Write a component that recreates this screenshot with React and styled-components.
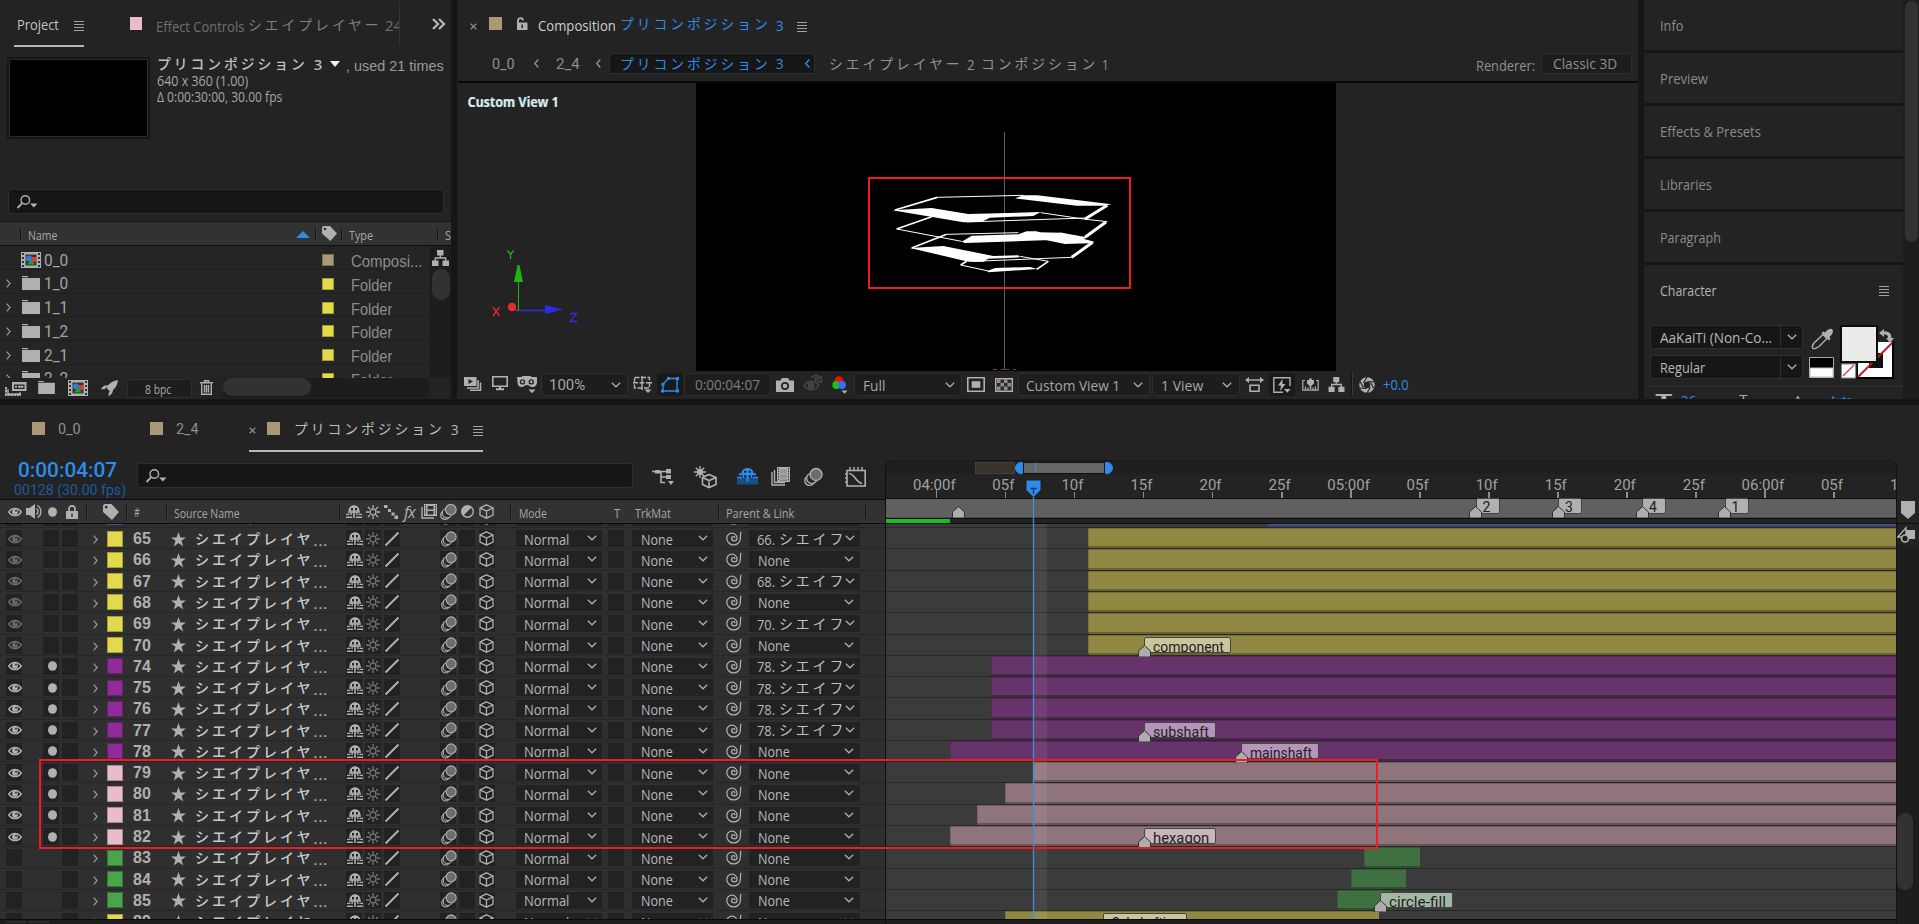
import React, { useLayoutEffect, useRef, useState } from "react";
import styled, { createGlobalStyle, css } from "styled-components";

const Global = createGlobalStyle`
  * { box-sizing: border-box; }
  html, body { margin: 0; padding: 0; background: #161616; overflow: hidden; }
  body { font-family: "Open Sans", "Noto Sans", "Noto Sans CJK JP", sans-serif; color: #a6a6a6; }
  svg { display: block; flex: none; }
`;

const C = {
  panel: "#232323", dark: "#161616", field: "#1d1d1d", edge: "#2e2e2e",
  icon: "#b0b0b0", text: "#a6a6a6", dim: "#7d7d7d", blue: "#2d8ceb", tan: "#ac9878",
  yellow: "#e4d84c", purple: "#902c98", pink: "#e8bcca", green: "#4aa44c",
};

/* ---------- text ---------- */
const FitBox = styled.span`
  display: block; flex: none; overflow: visible; white-space: pre;
  width: ${p => p.$w}px; margin-left: ${p => p.$ml || 0}px; margin-top: ${p => p.$dy || 0}px;
  font-size: ${p => p.$size || 15}px; line-height: 20px; height: 20px;
  color: ${p => p.$c || C.text}; font-weight: ${p => p.$b || 400};
  ${p => p.$roboto && css`font-family: Roboto, "Liberation Sans", sans-serif;`}
  ${p => p.$arial && css`font-family: "Liberation Sans", sans-serif;`}
  ${p => p.$jp && css`font-family: "Noto Sans CJK JP", sans-serif; letter-spacing: 3px;`}
`;
const FitText = styled.span`display: inline-block; transform-origin: 0 50%;`;

function T({ w, ml, dy, size, c, b, roboto, arial, jp, children }) {
  const ref = useRef(null);
  const [s, setS] = useState(1);
  useLayoutEffect(() => { setS(w / ref.current.offsetWidth); }, [w, children]);
  return (
    <FitBox $w={w} $ml={ml} $dy={dy} $size={size} $c={c} $b={b} $roboto={roboto} $arial={arial} $jp={jp}>
      <FitText ref={ref} style={{ transform: `scaleX(${s})` }}>{children}</FitText>
    </FitBox>
  );
}
function J({ children, ml, c, b, dy, pitch = 16.75, size = 14 }) {
  return <T jp w={pitch * children.length} ml={ml} c={c} b={b} dy={dy} size={size}>{children}</T>;
}

/* ---------- icons ---------- */
const Svg = styled.svg`margin-left: ${p => p.$ml || 0}px; margin-top: ${p => p.$dy || 0}px; overflow: visible;`;
const K = C.icon;
const S = { fill: "none", stroke: K, strokeWidth: 1.4 };
const ICONS = {
  burger: [10, 10, <path d="M0 .5h10M0 3.5h10M0 6.5h10M0 9.5h10" stroke="#a2a2a2" strokeWidth="1" />],
  close: [7, 7, <path d="M.7.7l5.6 5.6M6.3.7L.7 6.3" stroke="#8a8a8a" strokeWidth="1.3" />],
  dbl: [14, 12, <path d="M1 1l5 5-5 5M7 1l5 5-5 5" fill="none" stroke={K} strokeWidth="2.4" />],
  search: [20, 14, <g><circle cx="8.3" cy="5" r="4.3" {...S} /><path d="M5.2 8.2L.5 13" {...S} strokeWidth="1.8" /><path d="M13 8.5h7.5l-3.700 4z" fill={K} /></g>],
  chev: [10, 6, <path d="M.8.8L5 4.800 9.200.8" fill="none" stroke={K} strokeWidth="1.2" />],
  right: [5, 9, <path d="M.7.7l3.400 3.800L.7 8.300" fill="none" stroke="#9a9a9a" strokeWidth="1.2" />],
  left: [5, 9, <path d="M4.300.5L.8 4.500l3.500 4" fill="none" stroke="currentColor" strokeWidth="1.4" />],
  tag: [16, 16, <path fillRule="evenodd" d="M0 1.500L1.500 0h7L16 8l-7 8L0 8zM3.200 1.800a1.400 1.400 0 100 2.800 1.400 1.400 0 000-2.800z" fill={K} />],
  sort: [14, 7, <path d="M0 7l7-7 7 7z" fill={C.blue} />],
  down: [10, 6, <path d="M0 0h10L5 6z" fill="#f2f2f2" />],
  folder: [18, 14, <path d="M0 0h6v1.200H0zM0 2h18v12H0z" fill={K} />],
  comp: [20, 16, <g><path d="M0 0h20v16H0z" fill={K} /><path d="M2 1v14M18 1v14" stroke="#333" strokeWidth="2" strokeDasharray="2 2" /><path d="M4.500 2.500h11v11h-11z" fill="#333" /><circle cx="8" cy="6.500" r="3" fill="#2d7de0" /><path d="M10.500 5H15v5h-4.500z" fill="#e23434" /><path d="M6 12.500l4-5 4 5z" fill="#1ba31b" /></g>],
  org: [17, 16, <g><path d="M5 0h6.500v5.500H5zM0 10.500h6.500V16H0zM10.500 10.500H17V16h-6.500z" fill={K} /><path d="M8.300 5v3M3.300 11V8h10.400v3" {...S} /></g>],
  interp: [22, 15, <g><path d="M7 1h14.500v9H7z" fill={K} /><path d="M9 3.500h10.500v4.500H9z" fill="#232323" /><path d="M10 5.700h8.500" stroke={K} strokeWidth="2" strokeDasharray="2 1 6" /><path d="M1 6v8h14v-3" fill="none" stroke={K} strokeWidth="2" strokeDasharray="2.500 .6" /><path d="M3 8v5h11" {...S} /></g>],
  rocket: [17, 16, <g><path d="M17 0C11 1 7 4 5.500 8l3.500 3.500C14 9.500 16 6 17 0z" fill={K} /><path d="M0 9.500C1.500 6 4 5 7 5L4 9zM7.500 16c3.500-1.500 4.500-4 4.500-7L8 12z" fill={K} /></g>],
  trash: [13, 15, <g><path d="M4.500 2V.7h4V2M0 2.700h13" {...S} /><path d="M1.700 3.500V14.300h9.600V3.500M4.500 5v7.500M6.500 5v7.500M8.500 5v7.500" {...S} /></g>],
  unlock: [12, 13, <g><path d="M2 6V3.500C2 .2 7 .2 7 3.500" {...S} strokeWidth="1.800" /><path fillRule="evenodd" d="M1 5.500h10.500V13H1zM5.500 7.500v3.500h1.500V7.500z" fill={K} /></g>],
  lock: [12, 14, <g><path d="M3 6.500V4c0-4.300 6-4.300 6 0v2.500" {...S} strokeWidth="1.700" /><path fillRule="evenodd" d="M0 6h12v8H0zM5.300 8.500V12h1.400V8.500z" fill={K} /></g>],
  stack: [17, 14, <g><path d="M0 0h12.500v9H0z" fill={K} /><path d="M4.500 2l4.500 2.500L4.500 7z" fill="#232323" /><path d="M14 3v8H3M16.500 5.500V13.300H6" {...S} strokeWidth="1.600" /></g>],
  monitor: [16, 14, <g><path d="M.8.8h14.400v9.400H.8z" {...S} strokeWidth="1.600" /><path d="M4 13.300h8M8 10v3" {...S} strokeWidth="2" /></g>],
  goggles: [20, 17, <g><path fillRule="evenodd" d="M0 1h4l2-1h7l2 1h5v5c0 3-2 5-4.500 5-2.500 0-3.500-2-5.500-2S7 11 4.500 11C2 11 .5 9 .5 6zM5.500 3.200a2.700 2.700 0 100 5.400 2.700 2.700 0 000-5.400zM14.300 3.200a2.700 2.700 0 100 5.400 2.700 2.700 0 000-5.400z" fill={K} /><circle cx="5.500" cy="5.900" r="1.300" fill={K} /><circle cx="14.300" cy="5.900" r="1.300" fill={K} /><path d="M11.500 13.500h7l-3.500 3.800z" fill={K} /></g>],
  grid: [19, 17, <g><path d="M1.500 1.500h15v10.500h-15z" {...S} strokeDasharray="5 1.500" /><path d="M9 0v14M0 6.700h5M13 6.700h6M6.500 6.700h5" {...S} /><path d="M11.500 13.500h7l-3.500 3.500z" fill={K} /></g>],
  mask: [18, 16, <g><path d="M2 14V7l5.500-5.500H16V14z" fill="none" stroke={C.blue} strokeWidth="1.400" /><path d="M0 12.500h3v3H0zM15 12.500h3v3h-3zM15 0h3v3h-3zM6 0h3v3H6zM.5 6h3v3h-3z" fill={C.blue} /></g>],
  camera: [18, 14, <g><path fillRule="evenodd" d="M0 2.500h4.500L6 0h6l1.500 2.500H18V14H0zM9 4a4 4 0 100 8 4 4 0 000-8z" fill={K} /><circle cx="9" cy="8" r="2.300" fill={K} /></g>],
  eyedim: [19, 16, <g fill="none" stroke="#454545" strokeWidth="1.600"><path d="M.8 10.500c4-5.500 11-5.500 15 0-4 5.500-11 5.500-15 0z" /><circle cx="8" cy="10.500" r="2.500" fill="#454545" /><path d="M8 2h2l1-1.500h4L16 2h2.300v5H15" /><circle cx="13.500" cy="4" r="1.500" /></g>],
  rgb: [17, 18, <g><circle cx="7" cy="4.500" r="4.300" fill="#f40b0b" /><circle cx="4.300" cy="9" r="4" fill="#16c316" /><circle cx="10" cy="9" r="4" fill="#3f6cf5" /><path d="M9.500 14.500h6l-3 3.300z" fill={K} /></g>],
  frame: [18, 15, <g><path d="M.8.8h16.400v13.400H.8z" {...S} strokeWidth="1.600" /><path d="M4.700 4.200h8.600v6.600H4.700z" fill={K} /></g>],
  checker: [18, 14, <g><path d="M.7.7h16.600v12.600H.7z" {...S} fill="#2a2a2a" /><path d="M2 1.500h3.500v3.500H2zM9 1.500h3.500v3.500H9zM5.500 5H9v3.500H5.500zM12.500 5H16v3.500h-3.500zM2 8.500h3.500V12H2zM9 8.500h3.500V12H9z" fill="#8e8e8e" /></g>],
  stretch: [19, 15, <g><path d="M1 3h17" {...S} /><path d="M4 0v6L0 3zM15 0v6l4-3z" fill={K} /><path d="M5 8.200h9v6H5z" {...S} strokeWidth="1.600" /></g>],
  fast: [18, 16, <g><path d="M17 9V.8H.8V15.200H10" {...S} /><path d="M9.500 2L5 8.500h3L7 14l5.500-7H9.500z" fill={K} /><path d="M11 12h6.500l-3.200 3.800z" fill={K} /></g>],
  tl: [17, 12, <g><path d="M3 1.500H.8v9.700h15.400V1.500H14M3.500 7.500v3M6 8.500v2M11 8.500v2M13.500 7.500v3" {...S} strokeWidth="1.200" /><path d="M5 1h2.200v-1.500h2.600V1H12v3.500L9.300 7v3H7.700V7L5 4.500z" fill={K} /></g>],
  aperture: [16, 16, <g><circle cx="8" cy="8" r="5.500" fill="none" stroke={K} strokeWidth="4.500" /><path d="M8 0L4.500 6M15.500 5L8.500 4.500M15 11.500L11.500 5.500M8 16l3.500-6M.5 11l7 .5M1 4.500l3.500 6" stroke="#232323" strokeWidth="1.200" /></g>],
  dropper: [22, 21, <g><path d="M2 19.500c-1.500-1 0-4 1-5.500L12 5.500l4 4L8 17.500c-1.500 1-4.500 3-6 2z" {...S} /><path d="M10.500 4L12 2.500l2 1C16 1 20-1.500 21.500.7c1.500 2.500-1 5.300-3 7.300l1 2L18 11.500z" fill={K} /></g>],
  swap: [14, 13, <path d="M5 0L0 4l5 4V5.500c3-.500 4 1 4 3.500H7l4 5 4-5h-2.500C12.500 4.500 10 2 5 2.500z" fill={K} />],
  eye: [14, 10, <g><path d="M.8 5C4 .2 10 .2 13.200 5 10 9.800 4 9.800.8 5z" fill="none" stroke="currentColor" strokeWidth="1.500" /><circle cx="7" cy="4.800" r="2.900" fill="currentColor" /><circle cx="8" cy="3.800" r=".9" fill="#222" /></g>],
  speaker: [16, 15, <g><path d="M0 4h3.500L9 0v15L3.500 11H0z" fill={K} /><path d="M10.500 4.500c2 1.500 2 4.500 0 6M11.500 1.500c4.500 2.500 4.500 9.500 0 12" {...S} /></g>],
  dot: [9, 10, <ellipse cx="4.500" cy="5" rx="4.500" ry="4.800" fill={K} />],
  star: [15, 15, <path d="M7.500 0l1.900 5.400H15L10.500 8.800l1.700 5.700-4.700-3.400-4.700 3.400 1.700-5.700L0 5.400h5.600z" fill={K} />],
  shy: [16, 13, <g><path d="M2.500 6.500C2-2 14-2 13.500 6.500z" fill={K} /><path d="M5 3h2v2.500H5zM9 3h2v2.500H9z" fill="#262626" /><path d="M2 6.300h12v1.400H2zM7.200 5h1.600v8H7.200zM4.500 7.500h1.300V10H4.500zM10.200 7.500h1.300V10h-1.300zM0 8.800h3.500v1.200H0zM12.500 8.800H16v1.200h-3.500zM0 11.500h6V13H0zM10 11.500h6V13h-6z" fill={K} /></g>],
  sun: [14, 14, <g stroke="currentColor" fill="none" strokeWidth="1.300"><circle cx="7" cy="7" r="3" /><path d="M7 0v3M7 11v3M0 7h3M11 7h3M2 2l2 2M10 10l2 2M12 2l-2 2M4 10l-2 2" /></g>],
  slash: [14, 14, <path d="M.5 13.500L13.500.5" stroke={K} strokeWidth="1.900" />],
  dashes: [14, 14, <path d="M0 0h3.500v3H0zM4 4h3v3H4zM7.500 7.500h3v3h-3zM10.500 10.500H14V14h-3.500z" fill={K} />],
  film: [16, 15, <g><path d="M1 3v11h12" {...S} /><path fillRule="evenodd" d="M3 0h13v12H3zM6.500 2v3.500h6V2zM6.500 7v3.500h6V7z" fill={K} /><path d="M4.500 1v10M14.500 1v10" stroke="#333" strokeDasharray="1.500 1" /></g>],
  film2: [19, 19, <g><path d="M1 5v13h13M3.500 3v12.500H14" {...S} /><path fillRule="evenodd" d="M6 0h13v15H6zM9 2v5h7V2zM9 8.500v5h7v-5z" fill={K} /><path d="M7.500 1v13M17.500 1v13" stroke="#333" strokeDasharray="1.500 1.200" /><path d="M9 2h7v5H9zM9 8.500h7v5H9z" fill="#999" /></g>],
  blur: [17, 16, <g fill="none" stroke={K} strokeWidth="1.200"><circle cx="5" cy="11.200" r="4.300" /><circle cx="7" cy="9.200" r="4.700" fill="#2a2a2a" /><circle cx="10.800" cy="5.700" r="5.300" fill="#6d6d6d" /></g>],
  half: [13, 13, <g><circle cx="6.500" cy="6.500" r="5.800" {...S} /><path d="M2.400 10.600A5.800 5.800 0 0110.600 2.400z" fill={K} /></g>],
  cube: [15, 15, <path d="M7.500.8l6.500 3v7.400l-6.500 3-6.500-3V3.800zM1 3.800l6.500 3.200 6.500-3.200M7.500 7v7" {...S} strokeWidth="1.300" />],
  spiral: [16, 15, <path d="M9 7.200a1.700 1.700 0 00-3.400 0a2.700 2.700 0 005.400 0a5.100 5.100 0 00-10.200 0a6.800 6.800 0 0013.600 0Q14.400 3.500 14.800.8" {...S} strokeWidth="1.250" />],
  flow: [22, 16, <g><path d="M0 2.500h14M9 2.500v11h4M9 8h5" {...S} strokeWidth="1.600" /><path d="M3 1h5v3.500H3zM14 0h5v4.500h-5zM14 6h5v4h-5z" fill={K} /><path d="M16 12h6l-3 4z" fill={K} /></g>],
  draft: [23, 22, <g><circle cx="6" cy="6" r="3" fill={K} /><path d="M6 0v12M0 6h12M1.800 1.800l8.400 8.400M10.200 1.800L1.800 10.200" {...S} /><path d="M15 8.500l7 3v7l-7 3-6.500-3v-7zM8.500 11.500l6.500 3 7-3M15 14.500v7" {...S} strokeWidth="1.600" /></g>],
  bigshy: [21, 17, <g><path d="M0 9h21v7.500H0z" fill="#194d82" /><path d="M4.500 6C4-2 17-2 16.500 6z" fill={C.blue} /><path d="M7 2.800h2.500v2H7zM11.500 2.800H14v2h-2.500z" fill="#1c2b3c" /><path d="M2 6.300h17M10.500 4v9.500" stroke={C.blue} strokeWidth="2" /><path d="M6.500 7v3M14.500 7v3M0 9.500h5M16 9.500h5" stroke={C.blue} strokeWidth="1.300" /></g>],
  graph: [21, 20, <g><path d="M2 3.500h18.200V19H2z" {...S} strokeWidth="1.600" /><path d="M4 6.500c6 .5 7 9 13 10" {...S} strokeWidth="1.600" /><path d="M5 0v3M9 0v3M13 0v3M17 0v3M0 7h2M0 11h2M0 15h2" {...S} /></g>],
  shield: [14, 18, <path d="M0 0h14v12l-7 6-7-6z" fill={K} />],
  shapes: [18, 16, <g><path d="M9 3h9v9H9z" fill={K} /><path d="M.8 10L9 .8V10z" {...S} fill="#1d1d1d" /><circle cx="8" cy="11.500" r="3.500" {...S} fill="#1d1d1d" strokeWidth="1.700" /></g>],
};
function I({ n, ml, dy, w, h, c }) {
  const [vw, vh, body] = ICONS[n];
  return <Svg $ml={ml} $dy={dy} width={w || vw} height={h || vh} viewBox={`0 0 ${vw} ${vh}`} color={c || K}>{body}</Svg>;
}

/* ---------- shared parts ---------- */
const Screen = styled.div`width: 1919px; height: 924px; overflow: hidden; display: flex; flex-direction: column; gap: 6px; background: ${C.dark};`;
const TopArea = styled.div`display: flex; gap: 6px; height: 399px; flex: none;`;
const Panel = styled.section`display: flex; flex-direction: column; overflow: hidden; background: ${C.panel}; width: ${p => p.$w}px; flex: none;`;
const Bar = styled.div`display: flex; align-items: center; flex: none; height: ${p => p.$h}px; padding-left: ${p => p.$pl || 0}px; margin-bottom: ${p => p.$mb || 0}px;`;
const Swatch = styled.i`
  display: block; flex: none; width: ${p => p.$w || 13}px; height: ${p => p.$h || 13}px;
  margin-left: ${p => p.$ml || 0}px; margin-top: ${p => p.$dy || 0}px; background: ${p => p.$c};
  ${p => p.$rim && css`box-shadow: inset 0 0 0 1px rgba(0,0,0,.28);`}
`;
const ActiveTab = styled.div`
  display: flex; align-items: center; align-self: stretch; width: ${p => p.$w}px; margin-left: ${p => p.$ml}px; flex: none;
  border-bottom: 2px solid #b8b8b8; padding-top: 2px;
`;
const Field = styled.div`
  display: flex; align-items: center; flex: none; height: ${p => p.$h || 24}px; width: ${p => p.$w}px; padding-left: ${p => p.$pl || 8}px;
  margin-left: ${p => p.$ml || 0}px; background: ${p => p.$bg || C.field}; border: 1px solid ${C.edge}; border-radius: 3px;
`;
const Rule = styled.i`flex: none; width: 2px; height: ${p => p.$h || 13}px; margin-left: ${p => p.$ml || 0}px; background: #161616; border-right: 1px solid #3a3a3a;`;

/* ---------- project panel ---------- */
const ClipTitle = styled.div`display: flex; align-items: center; width: 244px; height: 43px; overflow: hidden; margin-left: 14px; border-right: 1px solid #333; flex: none;`;
const Preview = styled.div`display: flex; padding: 10px 0 0 7px; height: 142px; flex: none;`;
const Thumb = styled.div`width: 143px; height: 82px; background: #000; border: 2px solid #161616; outline: 1px solid #2b2b2b; outline-offset: -3px; flex: none;`;
const Meta = styled.div`padding-left: 7px; margin-top: -6px;`;
const TableHead = styled(Bar)`background: #323232; border-top: 1px solid #181818; border-bottom: 1px solid #0e0e0e;`;
const TableBody = styled.div`display: flex; height: 132px; overflow: hidden; flex: none;`;
const Items = styled.div`width: 430px; flex: none;`;
const Item = styled.div`
  display: grid; align-items: center; height: 23.75px; padding: 2px 0 0 6px; border-bottom: 1px solid #1e1e1e; background: #252525;
  grid-template-columns: 15px 23px 278px 29px auto;
`;
const ScrollCol = styled.div`flex: 1; background: #1d1d1d; display: flex; flex-direction: column; align-items: center; padding-top: ${p => (p.$pt === undefined ? 4 : p.$pt)}px; gap: 3px;`;
const Knob = styled.i`display: block; flex: none; width: ${p => p.$w}px; height: ${p => p.$h}px; border-radius: 9px; background: #323232;`;
const HTrack = styled.div`width: 206px; height: 20px; margin-left: 10px; background: #1d1d1d; flex: none;`;

const ITEMS = [["0_0", 1], ["1_0"], ["1_1"], ["1_2"], ["2_1"], ["2_2"]];

function Project() {
  return (
    <Panel $w={451}>
      <Bar $h={47}>
        <ActiveTab $w={70} $ml={14}>
          <T w={42} ml={2.5} c="#c2c2c2">Project</T><I n="burger" ml={15.500} dy={4} />
        </ActiveTab>
        <Swatch $c={C.pink} $w={12} $ml={46} />
        <ClipTitle>
          <T w={88} dy={4} c="#707070">Effect Controls</T><J ml={4} c="#7f7f7f">シエイプレイヤー</J><T w={17} ml={3} dy={3} c="#707070">24</T>
        </ClipTitle>
        <I n="dbl" ml={32} dy={1} />
      </Bar>
      <Preview>
        <Thumb />
        <Meta>
          <Bar $h={26}>
            <J b={500} c="#c0c0c0" dy={-3}>プリコンポジション</J><T w={9} ml={6} b={600} c="#b4b4b4">3</T><I n="down" ml={7} />
            <T w={98} ml={6} arial dy={4} c="#9a9a9a">, used 21 times</T>
          </Bar>
          <T w={91} size={14} dy={-6}>640 x 360 (1.00)</T>
          <T w={125} size={14} dy={-4}>Δ 0:00:30:00, 30.00 fps</T>
        </Meta>
      </Preview>
      <Field $w={436} $ml={8} $bg="#161616" $h={25}><I n="search" /></Field>
      <Bar $h={7} />
      <TableHead $h={25} $pl={20}>
        <Rule /><T w={29} ml={6} size={13} dy={3}>Name</T><I n="sort" ml={239} dy={1} /><Rule $ml={5} />
        <I n="tag" ml={5} w={15} h={15} /><Rule $ml={4} /><T w={24} ml={6} size={13} dy={3}>Type</T><Rule $ml={64} /><T w={6} ml={6} size={13} dy={3}>S</T>
      </TableHead>
      <TableBody>
        <Items>
          {ITEMS.map(([name, comp]) => (
            <Item key={name}>
              {comp ? <span /> : <I n="right" />}
              {comp ? <I n="comp" /> : <I n="folder" dy={-1} w={18} h={14} ml={1} />}
              <T w={24} roboto size={16} dy={1}>{name}</T>
              <Swatch $w={12} $h={12} $rim $c={comp ? C.tan : C.yellow} />
              <T w={comp ? 71 : 41} arial size={16} dy={4} c="#8c8c8c">{comp ? "Composi..." : "Folder"}</T>
            </Item>
          ))}
        </Items>
        <ScrollCol><I n="org" /><Knob $w={18} $h={31} /></ScrollCol>
      </TableBody>
      <Bar $h={20} $pl={5}>
        <I n="interp" /><I n="folder" ml={11} w={17} h={13} dy={-2} /><I n="comp" ml={12} w={22} h={16} /><I n="rocket" ml={12} dy={-1} />
        <Field $w={65} $h={19} $ml={9} $pl={17}><T w={26} size={12} dy={4}>8 bpc</T></Field>
        <I n="trash" ml={8} dy={-2} />
        <HTrack><Knob $w={88} $h={18} /></HTrack>
      </Bar>
    </Panel>
  );
}

/* ---------- composition panel ---------- */
const Viewer = styled.div`height: 289px; flex: none; border-top: 2px solid #0b0b0b; border-bottom: 2px solid #0b0b0b; margin-left: 1px;`;
const IconBox = styled.div`display: flex; align-items: center; justify-content: center; width: 26px; height: 23px; margin-left: ${p => p.$ml}px; background: #1a1a1a; border-radius: 3px; flex: none;`;

function Scene() {
  return (
    <svg width="1180" height="288" viewBox="458 83 1180 288">
      <rect x="458" y="83" width="1180" height="288" fill="#232323" />
      <rect x="696" y="83" width="640" height="288" fill="#000" />
      <text x="468.500" y="107" fontFamily="Open Sans, sans-serif" fontWeight="600" fontSize="14" textLength="91" lengthAdjust="spacingAndGlyphs" fill="#2a7f8c">Custom View 1</text>
      <text x="467.500" y="107" fontFamily="Open Sans, sans-serif" fontWeight="700" fontSize="14" textLength="91" lengthAdjust="spacingAndGlyphs" fill="#e6e6e6">Custom View 1</text>
      <path d="M1004.500 132V369" stroke="#5e5e5e" />
      <g transform="translate(830 120) scale(.33333)" fill="#fff" stroke="#fff" strokeWidth="0">
        <path d="M187 271L305 264 415 282 632 276 610 288 480 293 455 305 400 307z" />
        <path d="M555 235L580 226 622 226 845 253 820 257 740 257z" />
        <path d="M395 365L425 347 565 343 590 334 620 334 640 341 695 338 745 347 770 352 760 358 640 361 405 369z" />
        <path d="M240 384L340 378 490 408 565 406 570 412 475 416 460 425 415 425z" />
        <path d="M590 336L695 338 795 366 775 370 705 372 600 350z" />
        <path d="M472 453L495 444 600 441 622 447 475 457z" />
        <g fill="none" strokeWidth="3">
          <path d="M410 306L765 294M632 278L760 297 832 305M200 327L395 364M322 232L580 226M350 343L565 338M430 424L725 412M570 409L655 424M392 435L475 453" />
          <path d="M195 270L322 232M305 290L200 327M245 384L350 343M410 424L392 435M655 424L620 448" strokeWidth="5" />
          <path d="M832 256L765 297M828 306L765 352M788 367L725 412" strokeWidth="9" />
        </g>
      </g>
      <rect x="869" y="178" width="261" height="110" fill="none" stroke="#ee1c24" strokeWidth="2" />
      <path d="M993 369.500h4M1001 369.500h8M1013 369.500h3" stroke="#7a2c80" />
      <path d="M518.500 311V281" stroke="#1fb414" /><path d="M514 282l3.500-17h2l3.500 17z" fill="#1fb414" />
      <path d="M519 310.500h27" stroke="#2c2ce0" strokeWidth="1.500" /><path d="M545 305l18 4.500-18 4.500z" fill="#2c2ce0" />
      <circle cx="512" cy="307" r="4.200" fill="#e42d2d" /><path d="M514 309l4 2" stroke="#e42d2d" />
      <path d="M507.500 250.500l3 4 3-4M510.500 254v5" fill="none" stroke="#1fb414" strokeWidth="1.300" />
      <path d="M493 307l6.500 9M499.500 307l-6.500 9" stroke="#e42d2d" strokeWidth="1.300" />
      <path d="M570 313.500h6.500l-6.500 8h7" fill="none" stroke="#3030e0" strokeWidth="1.300" />
    </svg>
  );
}

function Composition() {
  return (
    <Panel $w={1181}>
      <Bar $h={50} $pl={13}>
        <I n="close" dy={2} /><Swatch $ml={12} $c={C.tan} $dy={-3} /><I n="unlock" ml={14} dy={-3} />
        <T w={78} ml={10} c="#cfcfcf">Composition</T><J ml={4} c={C.blue} dy={-4}>プリコンポジション</J>
        <T w={8} ml={5} c={C.blue} dy={-1}>3</T><I n="burger" ml={13} dy={3} />
      </Bar>
      <Bar $h={27} $pl={35} $mb={4}>
        <T w={23} roboto c="#8f8f8f">0_0</T><I n="left" ml={19} c="#8f8f8f" />
        <T w={24} roboto ml={17} c="#8f8f8f">2_4</T><I n="left" ml={16} c="#8f8f8f" />
        <Field $w={206} $ml={8} $h={21} $pl={10} $bg="#161616">
          <J c={C.blue} dy={-2}>プリコンポジション</J><T w={8} ml={5} c={C.blue} dy={-1}>3</T><I n="left" ml={21} c={C.blue} />
        </Field>
        <J ml={14} c="#929292" dy={-2}>シエイプレイヤー</J><T w={8} ml={4} c="#929292">2</T><J ml={6} c="#929292" dy={-2}>コンポジション</J><T w={7} ml={4} c="#929292">1</T>
        <T w={59} ml={367} dy={3} c="#8f8f8f">Renderer:</T>
        <Field $w={91} $ml={6} $h={21} $pl={11}><T w={64} c="#8f8f8f" dy={-1}>Classic 3D</T></Field>
      </Bar>
      <Viewer><Scene /></Viewer>
      <Bar $h={29} $pl={7}>
        <I n="stack" dy={-2} /><I n="monitor" ml={11} dy={-3} /><I n="goggles" ml={9} />
        <Field $w={87} $ml={4} $h={23}><T w={36} roboto ml={-1}>100%</T><I n="chev" ml={26} /></Field>
        <I n="grid" ml={5} /><IconBox $ml={5}><I n="mask" /></IconBox>
        <Field $w={87} $ml={1} $h={23} $pl={10}><T w={65} c="#7e7e7e" dy={-1}>0:00:04:07</T></Field>
        <I n="camera" ml={5} /><I n="eyedim" ml={9} dy={-3} /><I n="rgb" ml={10} />
        <Field $w={108} $ml={5} $h={23}><T w={23} dy={1}>Full</T><I n="chev" ml={59} /></Field>
        <I n="frame" ml={5} /><I n="checker" ml={10} />
        <Field $w={132} $ml={5} $h={23} $pl={7}><T w={94} dy={1}>Custom View 1</T><I n="chev" ml={13} /></Field>
        <Field $w={88} $ml={2} $h={23}><T w={42} dy={1}>1 View</T><I n="chev" ml={19} /></Field>
        <I n="stretch" ml={5} /><IconBox $ml={5}><I n="fast" /></IconBox><I n="tl" ml={7} /><I n="org" ml={9} w={17} h={15} />
        <Rule $ml={6} $h={23} /><I n="aperture" ml={6} /><T w={26} ml={8} c={C.blue} dy={-1}>+0.0</T>
      </Bar>
    </Panel>
  );
}

/* ---------- side panels ---------- */
const Side = styled.div`display: flex; flex: 1; background: #1d1d1d;`;
const SideList = styled.div`display: flex; flex-direction: column; gap: 3px; width: 259px; height: 399px; overflow: hidden; background: ${C.dark};`;
const SideTab = styled.div`display: flex; align-items: center; height: 50px; padding-left: 16px; background: ${C.panel}; flex: none;`;
const CharPanel = styled.div`height: 135px; background: ${C.panel}; flex: none;`;
const CharBody = styled.div`display: flex; padding: 10px 0 0 6px; height: 70px;`;
const Selects = styled.div`display: flex; flex-direction: column; gap: 6px;`;
const Split = styled.i`width: 1px; height: 22px; background: ${C.edge}; flex: none; margin-left: ${p => p.$ml}px;`;
const TypeRow = styled.div`display: flex; margin: 0 0 0 6px; border-top: 2px solid #2c2c2c; height: 20px; padding: 3px 0 0 5px;`;
const SwatchArt = styled.svg`margin-left: 6px;`;

function Swatches() {
  return (
    <SwatchArt width="86" height="56" viewBox="1809 325 86 56">
      <g transform="translate(1811 329)">{ICONS.dropper[2]}</g>
      <path d="M1809.500 357.500h24v20h-24z" fill="#000" stroke="#aaa" /><path d="M1810 368h23v9h-23z" fill="#fff" stroke="#bbb" />
      <path d="M1857 342h37v37h-37z" fill="#000" /><path d="M1858 342h34v35h-34z" fill="#fff" /><path d="M1869 353h14v15h-14z" fill="#111" />
      <path d="M1858 377l34-34" stroke="#c8141c" strokeWidth="1.800" />
      <path d="M1840 325h38v38h-38z" fill="#0c0c0c" /><path d="M1842 327h34v34h-34z" fill="#ebebeb" />
      <path d="M1841.500 364h14v14h-14z" fill="#fff" stroke="#8c8c8c" /><path d="M1843 376l11-11" stroke="#d34" strokeWidth="1.200" />
      <g transform="translate(1879 329)">{ICONS.swap[2]}</g>
    </SwatchArt>
  );
}

function SidePanels() {
  return (
    <Side>
      <SideList>
        {[["Info", 23], ["Preview", 48], ["Effects & Presets", 101], ["Libraries", 52], ["Paragraph", 61]].map(([n, w]) => (
          <SideTab key={n}><T w={w} c="#8b8b8b">{n}</T></SideTab>
        ))}
        <CharPanel>
          <SideTab><T w={57} c="#b4b4b4">Character</T><I n="burger" ml={162} dy={2} /></SideTab>
          <CharBody>
            <Selects>
              <Field $w={153} $bg="#161616"><T w={112} ml={1} c="#b8b8b8">AaKaiTi (Non-Co...</T><Split $ml={8} /><I n="chev" ml={6} /></Field>
              <Field $w={153} $bg="#161616"><T w={45} ml={1} c="#b8b8b8">Regular</T><Split $ml={75} /><I n="chev" ml={6} /></Field>
            </Selects>
            <Swatches />
          </CharBody>
          <TypeRow>
            <T w={17} b={700} size={16} c={K}>T</T><T w={15} ml={9} c={C.blue}>36</T><T w={9} ml={43} size={14}>T</T><T w={10} ml={45}>A</T><T w={22} ml={27} c={C.blue}>Auto</T>
          </TypeRow>
        </CharPanel>
      </SideList>
      <ScrollCol $pt={1}><Knob $w={13} $h={241} /></ScrollCol>
    </Side>
  );
}

/* ---------- timeline, layer outline ---------- */
const ROW = 21.29;
const Timeline = styled.section`display: flex; height: 519px; background: ${C.panel}; flex: none; position: relative;`;
const Left = styled.div`width: 885px; display: flex; flex-direction: column; flex: none;`;
const LayerHead = styled(Bar)`background: #323232; border-top: 1px solid #0c0c0c; border-bottom: 1px solid #0c0c0c;`;
const Clip = styled.div`height: 395px; overflow: hidden; flex: none; background: ${p => p.$bg};`;
const Stack = styled.div`margin-top: -17.2px; position: relative;`;
const Layer = styled.div`
  display: grid; align-items: center; height: ${ROW}px; padding-left: 6px; background: #2f2f2f; border-bottom: 1px solid #262626;
  grid-template-columns: 18px 19px 19px 25px 20px 26px 37px 25px 151px 19px 19px 19px 18px 19px 19px 20px 37px 92px 24px 94px 23px 111px;
`;
const Cell = styled.div`
  display: flex; align-items: center; justify-content: ${p => (p.$text ? "flex-start" : "center")}; height: 17px; width: ${p => p.$w || 16}px;
  background: ${p => (p.$bare ? "transparent" : "#222")}; padding-left: ${p => p.$pl || 0}px;
`;
const Clock = styled.div`width: 123px; padding-left: 14px; height: 47px; flex: none;`;
const Footer = styled.div`height: 5px; background: #1e1e1e; border-top: 1px solid #0c0c0c; flex: none;`;
const FooterBits = styled.div`display: flex; gap: 3px; padding: 1px 0 0 6px;`;
const Stub = styled.i`width: 20px; height: 3px; background: #262626; border-top: 1px solid #303030;`;
const FxMark = styled.span`width: 14px; margin-left: 6px; font: italic 16px/20px "Open Sans", sans-serif; letter-spacing: -1px; color: ${K}; flex: none;`;

const LAYERS = [
  { n: 64, c: "#5a6fd6", bar: [1267, 1896, "#4f5a96"], p: 0 },
  ...[65, 66, 67, 68, 69, 70].map(n => ({ n, c: C.yellow, bar: [1088, 1896, "#918943"], p: n % 2 ? n + 1 : 0 })),
  ...[74, 75, 76, 77].map(n => ({ n, c: C.purple, on: 1, bar: [991, 1896, "#66346a"], p: 78 })),
  { n: 78, c: C.purple, on: 1, bar: [950, 1896, "#66346a"] },
  { n: 79, c: C.pink, on: 1, bar: [1033, 1896, "#8f757b"] },
  { n: 80, c: C.pink, on: 1, bar: [1005, 1896, "#8f757b"] },
  { n: 81, c: C.pink, on: 1, bar: [977, 1896, "#8f757b"] },
  { n: 82, c: C.pink, on: 1, bar: [950, 1896, "#8f757b"] },
  { n: 83, c: C.green, off: 1, bar: [1364, 1420, "#3f7041"] },
  { n: 84, c: C.green, off: 1, bar: [1351, 1406, "#3f7041"] },
  { n: 85, c: C.green, off: 1, bar: [1337, 1392, "#3f7041"] },
  { n: 89, c: C.yellow, off: 1, bar: [1005, 1379, "#918943"] },
];
const NOTES = [[6, 1144, 87, "component", "#c9c59c"], [10, 1144, 72, "subshaft", "#b795bb"], [11, 1241, 78, "mainshaft", "#b795bb"], [15, 1144, 72, "hexagon", "#c7b6ba"], [18, 1380, 73, "circle-fill", "#a3b8a4"], [19, 1103, 84, "Subshafting", "#c9c59c"]];

function LayerRow({ l }) {
  return (
    <Layer>
      <Cell>{!l.off && <I n="eye" ml={2} c={l.on ? K : "#6b6b6b"} />}</Cell>
      <span />
      <Cell $bare={l.off}>{l.on && <I n="dot" ml={2} />}</Cell>
      <Cell />
      <I n="right" ml={6} dy={2} />
      <Swatch $w={16} $h={16} $rim $c={l.c} />
      <T w={18} arial b={700} size={16} dy={1} c="#b0b0b0">{String(l.n)}</T>
      <I n="star" ml={1} dy={1} />
      <Bar $h={20}><J c="#c8c8c8" b={500} pitch={17} dy={-1}>シエイプレイヤ</J><T w={15} dy={2} ml={-1} c="#a8a8a8">...</T></Bar>
      <Cell><I n="shy" ml={1} /></Cell>
      <Cell><I n="sun" c="#767676" /></Cell>
      <Cell><I n="slash" /></Cell>
      <span /><span />
      <Cell><I n="blur" w={16} h={16} ml={1} /></Cell>
      <Cell />
      <Cell><I n="cube" ml={-1} /></Cell>
      <Cell $text $w={86} $pl={8}><T w={45} c="#b8b8b8">Normal</T><I n="chev" ml={18} dy={-1} /></Cell>
      <Cell />
      <Cell $text $w={81} $pl={9}><T w={32} c="#b8b8b8">None</T><I n="chev" ml={25} dy={-1} /></Cell>
      <I n="spiral" />
      <Cell $text $w={111} $pl={8}>
        {l.p ? <><T w={18} c="#b8b8b8">{l.p + "."}</T><J ml={4} c="#c0c0c0" dy={-2} pitch={16.800}>シエイフ</J><I n="chev" ml={-1} dy={-1} /></>
          : <><T w={32} ml={1} c="#b8b8b8">None</T><I n="chev" ml={54} dy={-1} /></>}
      </Cell>
    </Layer>
  );
}

function Outline() {
  return (
    <Left>
      <Bar $h={47} $pl={32}>
        <Swatch $c={C.tan} /><T w={23} roboto ml={13} c="#8f8f8f">0_0</T>
        <Swatch $c={C.tan} $ml={69} /><T w={23} roboto ml={13} c="#8f8f8f">2_4</T>
        <ActiveTab $w={234} $ml={50}>
          <I n="close" dy={3} /><Swatch $c={C.tan} $ml={11} /><J ml={14} c="#bcbcbc" dy={-1}>プリコンポジション</J><T w={8} ml={6} c="#bcbcbc">3</T><I n="burger" ml={14} dy={4} />
        </ActiveTab>
      </Bar>
      <Bar $h={47}>
        <Clock>
          <T w={99} ml={4} dy={8} roboto b={500} size={21} c={C.blue}>0:00:04:07</T>
          <T w={112} size={14} roboto c="#1c5a9c">00128 (30.00 fps)</T>
        </Clock>
        <Field $w={496} $ml={14} $h={25} $bg="#161616"><I n="search" /></Field>
        <I n="flow" ml={19} dy={3} /><I n="draft" ml={20} dy={2} /><I n="bigshy" ml={20} dy={1} /><I n="film2" ml={13} dy={2} /><I n="blur" ml={14} dy={2} w={19} h={18} /><I n="graph" ml={22} dy={2} />
      </Bar>
      <LayerHead $h={25} $pl={8}>
        <I n="eye" /><I n="speaker" ml={4} /><I n="dot" ml={6} /><I n="lock" ml={9} /><Rule $ml={8} />
        <I n="tag" ml={15} /><Rule $ml={7} /><T w={6} ml={6} size={12} dy={2}>#</T><Rule $ml={26} /><T w={66} ml={6} size={13} dy={2}>Source Name</T>
        <Rule $ml={99} /><I n="shy" ml={5} /><I n="sun" ml={4} /><I n="dashes" ml={4} /><FxMark>fx</FxMark><I n="film" ml={3} />
        <I n="blur" ml={3} /><I n="half" ml={4} /><I n="cube" ml={5} /><Rule $ml={16} /><T w={28} ml={7} size={13} dy={2}>Mode</T>
        <T w={6} ml={67} size={13} dy={2}>T</T><T w={36} ml={15} size={13} dy={2}>TrkMat</T><Rule $ml={47} /><T w={68} ml={6} size={13} dy={2}>Parent & Link</T><Rule $ml={71} />
      </LayerHead>
      <Clip $bg="#2f2f2f"><Stack>{LAYERS.map(l => <LayerRow key={l.n} l={l} />)}</Stack></Clip>
      <Footer><FooterBits><Stub /><Stub /></FooterBits></Footer>
    </Left>
  );
}

/* ---------- timeline, tracks ---------- */
const Right = styled.div`width: 1012px; display: flex; flex-direction: column; flex: none; padding-top: 55px; position: relative; overflow: hidden;`;
const RightBody = styled.div`border-left: 1px solid #0e0e0e; border-right: 1px solid #121212; border-radius: 8px 8px 0 0;`;
const Navigator = styled.div`display: flex; align-items: center; height: 14px; background: #1f1f1f; padding-left: 89px; border-radius: 8px 8px 0 0; border-top: 1px solid #191919;`;
const Range = styled.i`display: block; width: ${p => p.$w}px; height: 12px; background: ${p => p.$c}; border: 1px solid ${p => p.$e}; border-radius: ${p => p.$r || 0}; flex: none;`;
const Ruler = styled.div`display: flex; height: 25px; padding-left: 15.800px; border-bottom: 1px solid #0c0c0c; overflow: hidden;`;
const Tick = styled.div`
  width: 69.050px; height: 24px; flex: none; position: relative; text-align: center; font: 15px/22px Roboto, sans-serif; color: #a0a0a0; padding-right: 4px;
  &::after { content: ""; position: absolute; left: 34px; bottom: 0; width: 1.500px; height: ${p => (p.$big ? 9 : 6)}px; background: #8d8d8d; }
`;
const MarkerBar = styled.div`height: 19px; background: #606060; border-bottom: 1px solid #4a4a4a; position: relative;`;
const Cache = styled.div`height: 6px; background: #242424; border-top: 1px solid #0c0c0c; border-bottom: 1px solid #0c0c0c; &::before { content: ""; display: block; width: 64px; height: 4px; background: #12c222; }`;
const Track = styled.div`height: ${ROW}px; border-bottom: 1px solid #282828; padding-left: ${p => p.$x}px;`;
const Clipbar = styled.div`height: 100%; width: ${p => p.$w}px; background: ${p => p.$c}; box-shadow: inset 1px 0 0 rgba(0,0,0,.15), inset 0 -2px 0 rgba(0,0,0,.28), inset 0 1px 0 rgba(0,0,0,.2);`;
const Pin = styled.div`position: absolute; left: ${p => p.$x - 6.500}px; top: ${p => p.$y}px; display: flex;`;
const Flag = styled.div`
  position: absolute; left: 6.500px; top: 0; width: ${p => p.$w}px; height: 16px; background: ${p => p.$c}; border: 1px solid #444; border-radius: 2px;
  display: flex; align-items: center; padding-left: ${p => p.$pl || 8}px; overflow: hidden;
`;
const House = styled.svg`margin-top: 8px; position: relative;`;
const Playhead = styled.svg`position: absolute; left: 141px; top: 75px;`;
const FrameShade = styled.i`position: absolute; left: 149px; top: 119px; width: 13px; height: 395px; background: rgba(255,255,255,.07);`;
const Rail = styled.div`flex: 1; background: #1d1d1d; display: flex; flex-direction: column;`;
const RailTop = styled.div`height: 119px; background: ${C.panel}; border-bottom: 1px solid #0c0c0c; padding: 96px 0 0 4px;`;
const RailMid = styled.div`height: 21px; background: ${C.panel}; padding-top: 3px; margin-bottom: 268px;`;
const RedFrame = styled.div`position: absolute; left: 39px; top: 354px; width: 1339px; height: 90px; border: 2px solid #ee1c24;`;

function PinMark({ x, y, w, c, label, small }) {
  return (
    <Pin $x={x} $y={y}>
      {label && <Flag $w={w} $c={c} $pl={small ? 6 : 8}><T w={small ? 8 : w - 16} roboto size={14} dy={small ? 2 : 4} c="#1c1c1c">{label}</T></Flag>}
      <House width="13" height="12" viewBox="0 0 13 12"><path d="M.5 12V6L6.500.5l6 5.500v6z" fill="#adadad" stroke="#333" /></House>
    </Pin>
  );
}

function Tracks() {
  return (
    <Right>
      <RightBody>
        <Navigator>
          <Range $w={40} $c="#38332d" $e="#453f38" /><Range $w={8} $c={C.blue} $e={C.blue} $r="6px 0 0 6px" />
          <Range $w={82} $c="#666" $e="#111" /><Range $w={8} $c={C.blue} $e={C.blue} $r="0 6px 6px 0" />
        </Navigator>
        <Ruler>
          {["04:00f", "05f", "10f", "15f", "20f", "25f", "05:00f", "05f", "10f", "15f", "20f", "25f", "06:00f", "05f", "10f"].map((t, i) => <Tick key={i} $big={t.length > 3}>{t}</Tick>)}
        </Ruler>
        <MarkerBar>
          <PinMark x={72} y={-1} />
          {[[589.500, "2"], [672, "3"], [756, "4"], [838.500, "1"]].map(([x, n]) => <PinMark key={n} x={x} y={-1} w={24} c="#b0b0b0" label={n} small />)}
        </MarkerBar>
        <Cache />
        <Clip $bg="#3b3b3b">
          <Stack>
            {LAYERS.map(l => <Track key={l.n} $x={l.bar[0] - 886}><Clipbar $w={l.bar[1] - l.bar[0]} $c={l.bar[2]} /></Track>)}
            {NOTES.map(([i, x, w, label, c]) => <PinMark key={label} x={x - 886} y={i * ROW + 2} w={w} c={c} label={label} />)}
          </Stack>
        </Clip>
        <Footer />
      </RightBody>
      <FrameShade />
      <Playhead width="16" height="439" viewBox="0 0 16 439" overflow="visible">
        <path d="M.5 1.500Q.5.5 1.500.500h12q1 0 1 1V10L7.500 17 .5 10z" fill={C.blue} /><path d="M4.500 8.500h6M7.500 8v6" stroke="#12345a" strokeWidth="1.300" />
        <path d="M7.500 17v422" stroke="#3d8fdf" strokeWidth="1.300" />
        <path d="M9.500-17.500v9.500" stroke={C.blue} />
      </Playhead>
    </Right>
  );
}

export default function App() {
  return (
    <Screen>
      <Global />
      <TopArea><Project /><Composition /><SidePanels /></TopArea>
      <Timeline>
        <Outline />
        <Tracks />
        <Rail>
          <RailTop><I n="shield" /></RailTop>
          <RailMid><I n="shapes" /></RailMid>
          <Knob $w={16} $h={77} />
        </Rail>
        <RedFrame />
      </Timeline>
    </Screen>
  );
}
